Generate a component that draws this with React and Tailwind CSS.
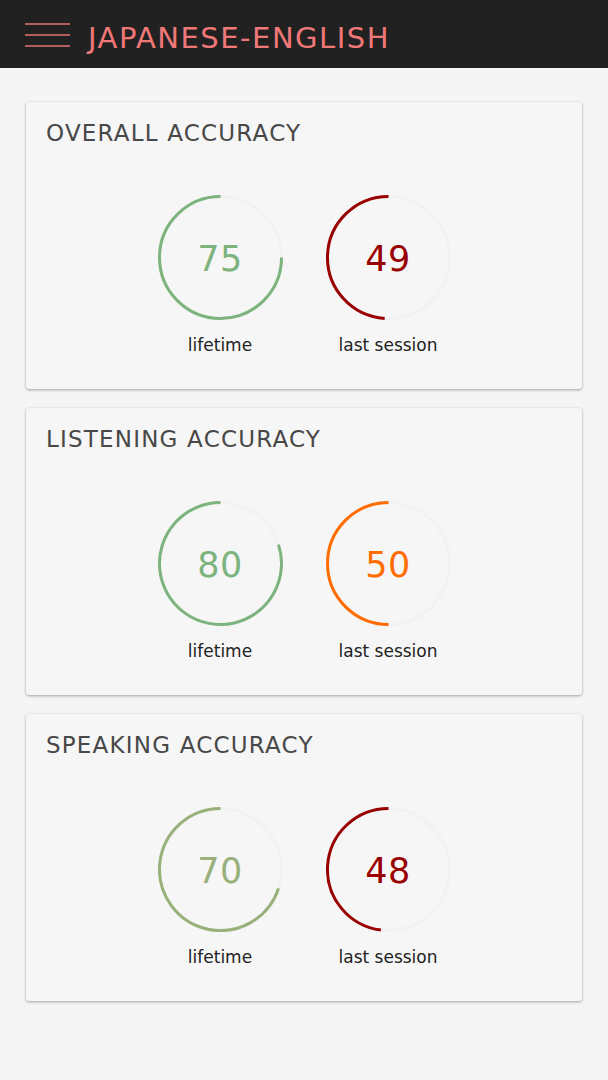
import React from "react";

const stats = [
  {
    title: "OVERALL ACCURACY",
    lifetime: { value: 75, color: "#7db37d" },
    session: { value: 49, color: "#990000" },
  },
  {
    title: "LISTENING ACCURACY",
    lifetime: { value: 80, color: "#7db37d" },
    session: { value: 50, color: "#ff6d00" },
  },
  {
    title: "SPEAKING ACCURACY",
    lifetime: { value: 70, color: "#98b07a" },
    session: { value: 48, color: "#990000" },
  },
];

function arcPath(pct, r, c) {
  const t = (pct / 100) * Math.PI * 2;
  const x = c - r * Math.sin(t);
  const y = c - r * Math.cos(t);
  const large = pct > 50 ? 1 : 0;
  return `M ${c} ${c - r} A ${r} ${r} 0 ${large} 0 ${x.toFixed(2)} ${y.toFixed(2)}`;
}

function Gauge({ value, color, label }) {
  return (
    <div className="flex flex-col items-center">
      <div className="relative w-[125px] h-[125px]">
        <svg width="125" height="125" viewBox="0 0 125 125">
          <circle cx="62.5" cy="62.5" r="61" fill="none" stroke="#f2f2f2" strokeWidth="3" />
          <path d={arcPath(value, 61, 62.5)} fill="none" stroke={color} strokeWidth="3" />
        </svg>
        <div
          className="absolute inset-0 pt-[3px] flex items-center justify-center text-[35px] tracking-[0.5px]"
          style={{ color }}
        >
          {value}
        </div>
      </div>
      <div className="mt-[13px] text-[17px] leading-6 text-[#222]">{label}</div>
    </div>
  );
}

function StatCard({ title, lifetime, session }) {
  return (
    <div className="h-[287px] bg-[#f6f6f6] rounded-[3px] shadow-[0_1px_3px_rgba(0,0,0,0.35)] px-[20px] pt-[17px]">
      <h2 className="text-[23px] leading-7 text-[#484848] tracking-[1.2px]">{title}</h2>
      <div className="mt-[48px] flex justify-center gap-[43px]">
        <Gauge value={lifetime.value} color={lifetime.color} label="lifetime" />
        <Gauge value={session.value} color={session.color} label="last session" />
      </div>
    </div>
  );
}

export default function App() {
  return (
    <div
      className="min-h-screen bg-[#f5f5f5]"
      style={{ fontFamily: "'DejaVu Sans', sans-serif" }}
    >
      <header className="h-[68px] bg-[#212121] flex items-center pl-[25px]">
        <svg width="46" height="26" viewBox="0 0 46 26" className="mt-[4px]">
          <line x1="0" y1="1" x2="45" y2="1" stroke="#e57373" strokeWidth="1.6" />
          <line x1="0" y1="12" x2="45" y2="12" stroke="#e57373" strokeWidth="1.6" />
          <line x1="0" y1="23" x2="45" y2="23" stroke="#e57373" strokeWidth="1.6" />
        </svg>
        <h1 className="ml-[17px] mt-[8px] text-[29px] leading-[36px] text-[#f07878] tracking-[1.5px]">
          JAPANESE-ENGLISH
        </h1>
      </header>
      <main className="px-[26px] pt-[34px] pb-[40px] flex flex-col gap-[19px]">
        {stats.map((s) => (
          <StatCard key={s.title} {...s} />
        ))}
      </main>
    </div>
  );
}
